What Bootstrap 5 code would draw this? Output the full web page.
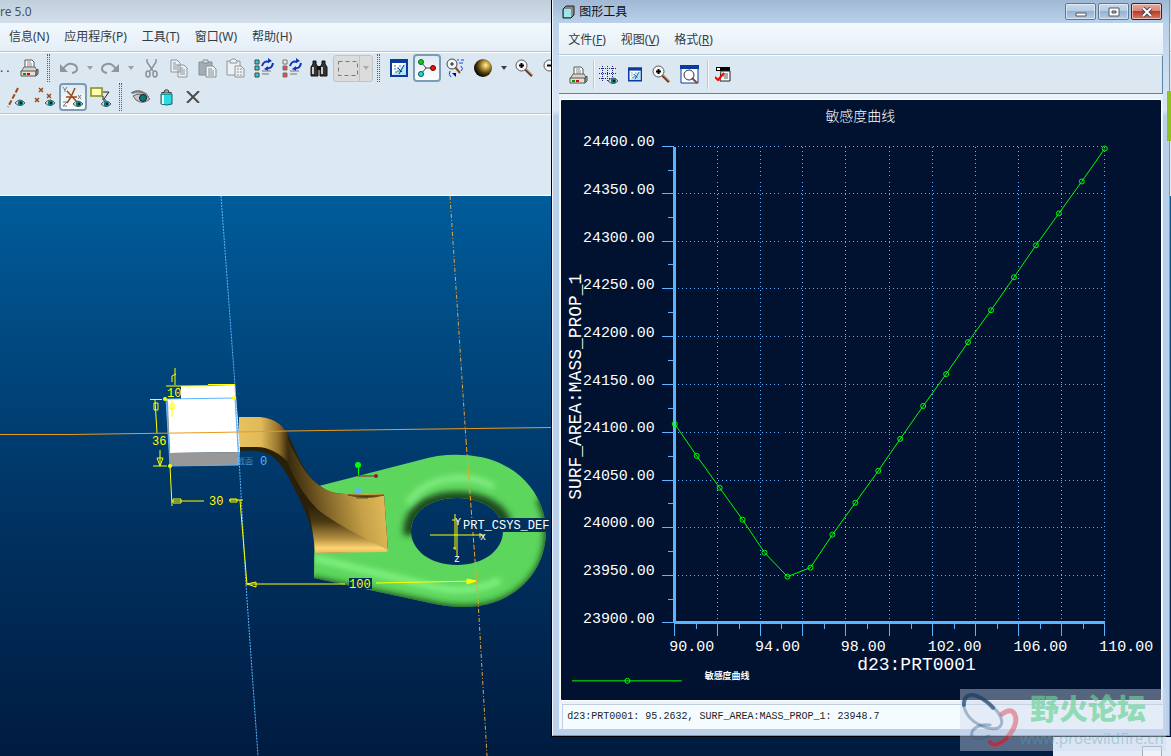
<!DOCTYPE html>
<html lang="zh-CN">
<head>
<meta charset="utf-8">
<meta name="viewport" content="width=device-width, initial-scale=1">
<title>Wildfire 5.0 - 图形工具</title>
<link href="https://cdn.jsdelivr.net/npm/bootstrap@5.3.0/dist/css/bootstrap.min.css" rel="stylesheet">
<script src="https://cdn.jsdelivr.net/npm/bootstrap@5.3.0/dist/js/bootstrap.bundle.min.js"></script>
<style>
  :root { --sky: #5ab4ff; --panel: #dbe8f2; --edge: #b2c8d6; }
  body { font: 12px/16px "Noto Sans", "Noto Sans CJK SC", sans-serif; color: #333b44; background: #001c42; }
  button, a { font-size: 12px; line-height: 16px; color: inherit; }
  .desk { min-height: 100vh; }
  .app-title { height: 23px; background: linear-gradient(#c1cfdc, #d2deeb); color: #48525e; }
  .app-menu { height: 28px; background: linear-gradient(#f1f8fd, #e5eef7); padding-left: 9px; gap: 15px; }
  .menu-item { border: 0; background: none; padding: 0; white-space: nowrap; }
  .tools { background: var(--panel); border-top: 1px solid var(--edge); border-bottom: 1px solid var(--edge); box-shadow: inset 0 1px #fff; padding: 2px 0 1px; height: 63px; gap: 1px; }
  .message { height: 82px; background: #dce9f3; border-top: 1px solid #fff; border-bottom: 1px solid #fff; }
  .tool { width: 28px; height: 28px; border: 0; background: none; padding: 0; display: flex; align-items: center; justify-content: center; flex: none; }
  .tool.narrow { width: 24px; }
  .tool.pressed { border: 2px solid #7a9db5; border-radius: 4px; background: linear-gradient(#dde9f2, #fff); }
  .drop { width: 13px; height: 28px; border: 0; background: none; padding: 0; flex: none; display: flex; align-items: center; justify-content: center; }
  .drop::after { content: ""; border: 3px solid transparent; border-top: 4px solid #9a9fa5; border-bottom: 0; }
  .drop.dark::after { border-top-color: #3a4048; }
  .grip { width: 3px; height: 28px; margin: 0 5px 0 4px; flex: none; border-left: 1px dotted #2b6a92; border-right: 1px dotted #2b6a92; }
  .picker { width: 40px; height: 27px; border: 1px solid #c2c2c2; border-radius: 3px; background: #dcdcdc; flex: none; }
  .picker .drop { border-left: 1px solid #c2c2c2; height: 25px; }
  .picker .drop::after { border-top-color: #a8b0a8; }
  .more-dots { width: 15px; flex: none; }
  .row-two { padding-left: 3px; }
  .viewport { background: linear-gradient(#005c9b, #00467c 30%, #003160 60%, #001b40); min-height: 560px; overflow: hidden; }
  .viewport svg { width: 551px; height: 560px; display: block; flex: none; }
  .cad { font-family: "Liberation Mono", "Noto Sans CJK SC", monospace; font-weight: 300; }

  .graph-win { position: absolute; left: 47%; right: 1px; top: 0; bottom: 19px; margin-left: 1px; border-left: 1px solid #000; border-bottom: 1px solid #000; }
  .frame { border-right: 1px solid #35b7d6; border-bottom: 1px solid #35b7d6; border-left: 1px solid #eef5fc; background: linear-gradient(#9fb8d3, #b9d0ea 22px, #dce8f5 110px, #b8d0ea 116px, #bcd0ea); padding: 0 6px 6px; }
  .win-title { height: 23px; color: #111; padding-left: 3px; }
  .cap-row { gap: 2px; padding-right: 1px; }
  .cap-btn { width: 31px; height: 17px; border: 1px solid #5f7894; border-radius: 2px; padding: 0; display: flex; align-items: center; justify-content: center; background: linear-gradient(#c8d9eb, #b5cbe2 50%, #97b3cf 50%, #b4cde6); box-shadow: inset 0 0 0 1px rgba(255,255,255,.5); }
  .cap-btn.shut { border-color: #5a1420; background: linear-gradient(#e5a79c, #d98475 50%, #b83c28 50%, #d87b64); }
  .win-menu { height: 32px; background: linear-gradient(#f3faff, #e6eef6); border-bottom: 1px solid var(--edge); padding: 2px 9px 0; gap: 15px; }
  .win-tools { height: 39px; background: var(--panel); border-top: 1px solid #fff; border-right: 1px solid #5887a5; border-bottom: 1px solid #5887a5; padding-left: 5px; }
  .rule { width: 1px; height: 28px; background: #b9c9d6; margin: 0 1px; flex: none; box-shadow: 1px 0 #f4f9fc; }
  .plot-box { background: #eaf2fa; padding: 5px 1px 3px; }
  .plot { background: #001230; border: 1px solid #fff; border-radius: 2px; overflow: hidden; }
  .plot svg { width: 100%; height: 100%; display: block; }
  .status { background: #f5fcff; border: 1px solid #c2cfdf; border-right: 0; border-bottom: 0; height: 25px; margin-left: 3px; padding-left: 4px; font: 10px/16px "Liberation Mono", monospace; color: #20262c; }
  .status-wrap { background: #f0f8fe; }
  .side-tab { position: absolute; right: 0; top: 91px; width: 4px; height: 50px; background: #90c31f; }
  .corner { position: absolute; right: 0; bottom: 0; width: 118px; height: 19px; background: #e3ecf6; padding: 9px 9px 0 0; }
  .corner i { width: 20px; height: 10px; border: 1px solid #9faab5; border-bottom: 0; background: #eef3f8; display: block; }
  .stamp { position: absolute; right: 5px; bottom: 5px; width: 206px; height: 62px; background: rgba(205,217,235,.42); }
  .stamp svg { width: 60px; height: 62px; flex: none; }
  .stamp-name { font: 900 29px/36px "Noto Sans CJK SC", sans-serif; color: rgba(105,210,150,.68); padding-left: 10px; }
  .stamp-url { font: 15px/26px "Noto Sans", sans-serif; color: rgba(90,165,185,.4); text-decoration: none; }
</style>
</head>
<body>
<svg width="0" height="0" class="position-absolute" aria-hidden="true">
  <defs>
    <g id="eye"><path d="M0 4Q5-2 10 4Q5 9 0 4Z" fill="#d8e4e4" stroke="#555" /><circle cx="5.500" cy="4" r="2.700" fill="#067a80"/><path d="M5 3h2v2H5z" fill="#022"/></g>
    <g id="printer"><path d="M5 8V1h7l2 2v5" fill="#fff" stroke="#555"/><path d="M7 3h4M7 5h5M7 7h5" stroke="#888"/><path d="M1 13l3-5h11l3 5z" fill="#d8d4c8" stroke="#666"/><path d="M1 12h15v5H1z" fill="#e4e0d4" stroke="#555"/><path d="M16 12l2-2v5l-2 2z" fill="#999" stroke="#555"/><path d="M3 14h3v2H3z" fill="#090"/><path d="M7 14h3v2H7z" fill="#d00"/></g>
    <g id="zoomin"><path d="M10 10l7 7" stroke="#6b3a20" stroke-width="2.500"/><path d="M11 10l6 6" stroke="#c98a60"/><circle cx="6.500" cy="6.500" r="5.500" fill="#f4f8fa" stroke="#555"/><path d="M4 6.500h5M6.500 4v5" stroke="#000" stroke-width="2"/></g>
    <g id="repaint"><path d="M1 1h16v16H1z" fill="#fff" stroke="#0b3ba0" stroke-width="2"/><path d="M0 0h18v4H0z" fill="#0b3ba0"/><path d="M2 16L16 4v12z" fill="#b8e3fb"/><path d="M4 7h2m1 2h2M4 10h2m1 2h3M9 7h2M5 13h2" stroke="#28a"/><path d="M9 15q2-3 5-9M12 13L8 9" stroke="#003c86"/></g>
    <g id="cycle" fill="none" stroke="#1035b5" stroke-width="2"><path d="M9 8Q11 2 16 4M20 5Q19 11 14 10"/><path d="M15 0v5l4-2zM15 8v5l-4-2z" fill="#1035b5" stroke="none"/></g>
    <radialGradient id="gold" cx=".65" cy=".35" r=".7"><stop stop-color="#fff3a8"/><stop offset=".25" stop-color="#cda94c"/><stop offset=".65" stop-color="#4c390c"/><stop offset="1"/></radialGradient>
  </defs>
</svg>

<main class="desk d-flex flex-column position-relative overflow-hidden">
  <header>
    <div class="app-title d-flex align-items-center">re 5.0</div>
    <nav class="app-menu d-flex align-items-center" aria-label="主菜单">
      <button class="menu-item">信息(N)</button><button class="menu-item">应用程序(P)</button><button class="menu-item">工具(T)</button><button class="menu-item">窗口(W)</button><button class="menu-item">帮助(H)</button>
    </nav>
    <div class="tools d-flex flex-column">
      <div class="d-flex align-items-center">
        <span class="more-dots">. .</span>
        <button class="tool" aria-label="打印"><svg width="19" height="18" fill="none"><use href="#printer"/></svg></button>
        <span class="grip"></span>
        <button class="tool" aria-label="撤消"><svg width="18" height="14" fill="none" stroke="#8f979e" stroke-width="2"><path d="M3 8Q7 2 12 3Q17 4 17 8Q17 11 12 12"/><path d="M0 3v8h8z" fill="#8f979e" stroke="none"/></svg></button><button class="drop" aria-label="撤消列表"></button>
        <button class="tool" aria-label="重做"><svg width="18" height="14" fill="none" stroke="#8f979e" stroke-width="2"><path d="M15 8Q11 2 6 3Q1 4 1 8Q1 11 6 12"/><path d="M18 3v8h-8z" fill="#8f979e" stroke="none"/></svg></button><button class="drop" aria-label="重做列表"></button>
        <button class="tool" aria-label="剪切"><svg width="13" height="19" fill="none" stroke="#899199" stroke-width="1.500"><path d="M2 0v3l6 9M11 0v3L5 12"/><ellipse cx="3" cy="15" rx="2" ry="3"/><ellipse cx="10" cy="15" rx="2" ry="3"/></svg></button>
        <button class="tool" aria-label="复制"><svg width="18" height="19" fill="#edf2f5" stroke="#8b949b"><path d="M1 1h6l3 3v9H1zM8 6h6l3 3v9H8z"/><path d="M3 4h3M3 6h5M3 8h4M3 10h4M10 9h3M10 11h5M10 13h5M10 15h5"/></svg></button>
        <button class="tool" aria-label="粘贴"><svg width="19" height="19" fill="#a5adb3" stroke="#858e95"><path d="M1 3h13v13H1z"/><path d="M5 1h5v3H5z" fill="#ddd"/><path d="M8 7h7l3 3v8H8z" fill="#eef3f5"/><path d="M10 10h4M10 12h6M10 14h6M10 16h6"/></svg></button>
        <button class="tool" aria-label="选择性粘贴"><svg width="19" height="20" fill="#edf1f3" stroke="#8c949a"><path d="M1 3h13v14H1z"/><path d="M4 3l2-2h3l2 2v2H4z"/><path d="M9 8h6l3 3v8H9z"/><path d="M11 11h2M11 14h2M11 17h2M14 11h2M14 14h2M14 17h2"/></svg></button>
        <button class="tool" aria-label="再生"><svg width="21" height="20"><g fill="#36c9c9" stroke="#444"><path d="M2 2h4v4H2zM2 8h4v4H2zM2 15h4v4H2z"/></g><use href="#cycle"/><path d="M9 13h9M9 16h7" stroke="#777"/></svg></button>
        <button class="tool" aria-label="再生管理器"><svg width="21" height="20"><g fill="#e44" stroke="#777"><path d="M2 2h4v4H2z" fill="#eee"/><path d="M2 8h4v4H2zM2 15h4v4H2z"/></g><use href="#cycle"/><path d="M9 13h9M9 16h7" stroke="#777"/></svg></button>
        <button class="tool" aria-label="查找"><svg width="18" height="17"><path d="M3 1h3v3l2 3v9H1V7l2-3zM12 1h3v3l2 3v9h-7V7l2-3z" fill="#333" stroke="#111"/><path d="M7 6h4v4H7z" fill="#111"/><path d="M3 7v7M12 7v7" stroke="#ccc" stroke-width="2"/></svg></button>
        <span class="picker d-flex align-items-center justify-content-between"><svg class="ms-1" width="20" height="15" fill="none" stroke="#777"><path d="M.5.5h19v14H.5z" stroke-dasharray="4 3"/></svg><button class="drop" aria-label="选择方式"></button></span>
        <span class="grip"></span>
        <button class="tool" aria-label="重画"><svg width="18" height="18" fill="none"><use href="#repaint"/></svg></button>
        <button class="tool pressed" aria-label="旋转中心"><svg width="18" height="18"><path d="M3 3l5 6h8M8 9l-5 6" stroke="#444" fill="none"/><circle cx="3" cy="3" r="2.500" fill="#1c1" stroke="#063"/><circle cx="3" cy="15" r="2.500" fill="#2dd" stroke="#055"/><circle cx="15" cy="9" r="2.500" fill="#e11" stroke="#600"/></svg></button>
        <button class="tool" aria-label="定向模式"><svg width="18" height="20" fill="none"><path d="M9 9l5 6" stroke="#8a4b25" stroke-width="2"/><circle cx="6" cy="6" r="5" fill="#f2f7fa" stroke="#444"/><path d="M4 6h4M6 4v4" stroke="#222"/><path d="M11 2h2m2 0h3M13 5h4M15 8q3 3 0 5M4 13q-2 4 1 6" stroke="#14c"/><path d="M6 15h4v4z" fill="#009"/></svg></button>
        <button class="tool" aria-label="外观库"><svg width="18" height="18"><circle cx="9" cy="9" r="9" fill="url(#gold)"/></svg></button><button class="drop dark" aria-label="外观列表"></button>
        <button class="tool" aria-label="放大"><svg width="19" height="19" fill="none"><use href="#zoomin"/></svg></button>
        <button class="tool" aria-label="缩小"><svg width="19" height="19" fill="none"><path d="M10 10l7 7" stroke="#6b3a20" stroke-width="2.500"/><circle cx="6.500" cy="6.500" r="5.500" fill="#f4f8fa" stroke="#555"/><path d="M4 6.500h5" stroke="#000" stroke-width="2"/></svg></button>
      </div>
      <div class="row-two d-flex align-items-center">
        <button class="tool" aria-label="基准轴"><svg width="20" height="21" fill="none"><path d="M11 1L1 20" stroke="#9a4a18" stroke-width="2" stroke-dasharray="5 2"/><use href="#eye" x="8" y="12"/></svg></button>
        <button class="tool" aria-label="基准点"><svg width="22" height="21" fill="none"><path d="M5 1l4 4m0-4L5 5M1 11l4 4m0-4l-4 4M13 7l4 4m0-4l-4 4" stroke="#9a4a18" stroke-width="1.500"/><use href="#eye" x="11" y="12"/></svg></button>
        <button class="tool pressed" aria-label="坐标系"><svg width="22" height="22" fill="none"><path d="M1 1l2 3 2-3M3 4v2M1 16h4l-4 4h4M16 9l3 4m0-4l-3 4" stroke="#777"/><path d="M13 2L9 11H4M9 11h6M5 5l10 11M9 11l-4 6" stroke="#9a4a18" stroke-width="1.500"/><use href="#eye" x="11" y="14"/></svg></button>
        <button class="tool" aria-label="注释"><svg width="22" height="22" fill="none"><path d="M1 2h11v8H1z" fill="#ffffb0" stroke="#8a8a10" stroke-width="1.500"/><path d="M13 6h6l-5 7m-1-3v4h3" stroke="#222"/><use href="#eye" x="11" y="14"/></svg></button>
        <span class="grip"></span>
        <button class="tool" aria-label="显示"><svg width="20" height="16" fill="none"><path d="M0 4Q9-2 18 8M2 7Q10 2 19 10Q12 16 5 11z" fill="#c9c9c5" stroke="#666"/><path d="M1 4Q9 0 16 6" stroke="#777" stroke-width="2"/><circle cx="12" cy="9" r="3.500" fill="#067a80" stroke="#222"/></svg></button>
        <button class="tool narrow" aria-label="删除"><svg width="14" height="17"><path d="M1 5h11v10q-5 2-11 0z" fill="#2bd9e0" stroke="#166"/><path d="M3 6v9" stroke="#dff" stroke-width="2"/><path d="M1 4q5-2 11 0M4 3q0-3 4-2l1 2" stroke="#333" fill="none"/></svg></button>
        <button class="tool" aria-label="关闭"><svg width="14" height="12"><path d="M1 0l12 12M13 0L1 12" stroke="#4a4a4a" stroke-width="2"/></svg></button>
      </div>
    </div>
    <div class="message"></div>
  </header>

  <section class="viewport flex-grow-1 d-flex" aria-label="模型">
    <svg class="cad" viewBox="0 196 551 560" fill="none">
      <defs>
        <linearGradient id="arm" gradientUnits="userSpaceOnUse" x1="238" x2="289" y1="0" y2="0"><stop stop-color="#e9c35f"/><stop offset=".45" stop-color="#e0b958"/><stop offset=".8" stop-color="#93712d"/><stop offset="1" stop-color="#33270b"/></linearGradient>
        <linearGradient id="bend" gradientUnits="userSpaceOnUse" x1="288" x2="386" y1="470" y2="452"><stop stop-color="#33270b"/><stop offset=".3" stop-color="#7d6126"/><stop offset=".65" stop-color="#c6a047"/><stop offset="1" stop-color="#e9c35f"/></linearGradient>
        <linearGradient id="foot" gradientUnits="userSpaceOnUse" x1="0" x2="0" y1="505" y2="553"><stop stop-color="#2a1f08"/><stop offset=".35" stop-color="#4b3912"/><stop offset=".7" stop-color="#b58f41"/><stop offset=".9" stop-color="#ffd573"/><stop offset="1" stop-color="#e6b95a"/></linearGradient>
        <path id="lug" fill-rule="evenodd" d="M315 487L420 460Q440 454 462 455C515 456 546 494 546 532C545 575 512 607 463 607Q448 607 430 603L314 578ZM457 498C430 498 411 512 411 531S430 565 457 565S503 550 503 531S484 498 457 498Z"/>
        <clipPath id="lugclip"><use href="#lug" clip-rule="evenodd"/></clipPath>
        <filter id="soft" x="-20%" y="-20%" width="140%" height="140%"><feGaussianBlur stdDeviation="3"/></filter>
      </defs>
      <use href="#lug" fill="#5dd65d"/>
      <g clip-path="url(#lugclip)">
        <g filter="url(#soft)">
          <path d="M310 586L430 611Q448 615 463 615C517 615 554 580 554 532Q554 514 545 496" stroke="#1f521f" stroke-width="20"/>
          <path d="M314 558L430 586Q470 596 500 580" stroke="#8dfa8d" stroke-width="5"/>
          <path d="M411 535C409 512 430 499 457 499S502 512 504 524" stroke="#1b4a1b" stroke-width="15"/>
          <path d="M408 503Q425 479 458 478Q480 478 494 487" stroke="#98fa98" stroke-width="4"/>
        </g>
      </g>
      <path d="M239 417H260C275 418 283 426 288 434C299 458 304 474 320 486Q330 494 345 494H384L388 551L315 553C314 530 307 515 300 500C288 475 280 460 270 455Q259 449 240 451Z" fill="#2a1f08"/>
      <path d="M239 417H260C275 418 283 426 288 434L290 464Q273 446 255 447H239Z" fill="url(#arm)"/>
      <path d="M288 440C299 462 306 476 320 486Q332 494 345 494H384L388 551Q340 528 318 510Q300 492 288 464Z" fill="url(#bend)"/>
      <path d="M305 498Q320 517 388 550L387 552L315 553Q313 525 305 498Z" fill="url(#foot)"/>
      <path d="M348 495q18 5 36 0q-18 1-36 0M356 498h12" fill="#4b3912" stroke="#6b5118"/>
      <path d="M181 386L235 385L238 420L240 452L170 453L167 399H181Z" fill="#fff"/>
      <path d="M170 453L240 452L239 465L170 466L166 400L168 401Z" fill="#989898"/>
      <path d="M166 399L235 398L239 465L170 466Z" stroke="#5ab4ff"/>
      <path d="M221 196L235 385M246 585L258 756" stroke="#5ab4ff" stroke-dasharray="2 1"/>
      <path d="M235 385L246 585" stroke="#5ab4ff" stroke-dasharray="2 1"/>
      <path d="M450 196L466 440M478 600L487 756" stroke="#e8a53c" stroke-dasharray="4 2 1 2"/>
      <path d="M466 440L478 600" stroke="#ff9f18" stroke-dasharray="5 2"/>
      <path d="M0 434.500H70L214 432.500L288 431L360 430L551 427.500" stroke="#e99a20"/>
      <g stroke="#ff0">
        <path d="M166 386h42M208 384.500h27M175 368v17M172 382v-6l4-2M150 399.500h12M155 400l2 33M154 410v-7h4v7zM153 466h14M160 450v16M157 458h6l-3 8zM170 466L172 506M172 501h32M173 499h8v4h-8zM229 500h14M230 499h7v3h-7zM240 500L247 585" />
        <path d="M172 400v17M170 405v4h4v-6z"/>
        <path d="M247 584h98M376 583L476 581M247 584l9-2v5z"/>
        <path d="M467 579l9 2-9 3z" fill="#ff0"/>
        <path d="M455 514v36M457 520v37M430 535h54M455 520h-3M453 548h3M480 533v5"/>
      </g>
      <g fill="#ff0"><circle cx="165" cy="399" r="2"/><circle cx="170" cy="466" r="2"/><circle cx="234" cy="398" r="2"/></g>
      <path d="M358.500 466v10" stroke="#0f0"/><path d="M358 476h18" stroke="#a01038"/><path d="M357.500 477v14" stroke="#5ab4ff"/>
      <circle cx="358" cy="465" r="3" fill="#0f0"/><circle cx="376" cy="476" r="2" fill="#a01038"/><circle cx="358" cy="491" r="3" fill="#5ab4ff"/>
      <path d="M349 578h23v11h-23zM462 518h88v14h-88z" fill="#00305c"/>
      <g fill="#ff0" font-size="12"><text x="167" y="397">10</text><text x="152" y="445">36</text><text x="209" y="505">30</text><text x="349" y="588">100</text></g>
      <g fill="#fff" font-size="12"><text x="463" y="529">PRT_CSYS_DEF</text><text x="455" y="525" font-size="10">Y</text><text x="480" y="540" font-size="10">x</text><text x="454" y="562" font-size="10">z</text></g>
      <g fill="#5ab4ff"><text x="237" y="464" font-size="8">截面</text><text x="260" y="465" font-size="12">0</text></g>
    </svg>
  </section>

  <section class="graph-win d-flex" aria-label="图形工具">
    <div class="frame d-flex flex-column flex-grow-1">
      <div class="win-title d-flex align-items-center">
        <svg width="13" height="14"><path d="M1 4l3-3h8v9l-3 3H1z" fill="#888" stroke="#222"/><path d="M2 4h7v8H2z" fill="#9ce8e8"/></svg>
        <span class="ms-1 flex-grow-1">图形工具</span>
        <span class="cap-row d-flex">
          <button class="cap-btn" aria-label="最小化"><svg width="12" height="10"><path d="M1 6h10v3H1z" fill="#fff" stroke="#556"/></svg></button>
          <button class="cap-btn" aria-label="最大化"><svg width="12" height="10"><path d="M1 1h10v8H1z" fill="#fff" stroke="#556"/><path d="M4 4h4v2H4z" fill="#9ab" stroke="#556"/></svg></button>
          <button class="cap-btn shut" aria-label="关闭"><svg width="12" height="10"><path d="M2 1l8 8M10 1L2 9" stroke="#445" stroke-width="4"/><path d="M2 1l8 8M10 1L2 9" stroke="#fff" stroke-width="2"/></svg></button>
        </span>
      </div>
      <nav class="win-menu d-flex align-items-center" aria-label="图形菜单">
        <button class="menu-item">文件(<u>F</u>)</button><button class="menu-item">视图(<u>V</u>)</button><button class="menu-item">格式(<u>R</u>)</button>
      </nav>
      <div class="win-tools d-flex align-items-center">
        <button class="tool" aria-label="打印"><svg width="19" height="18" fill="none"><use href="#printer"/></svg></button>
        <span class="rule"></span>
        <button class="tool" aria-label="栅格"><svg width="20" height="20" fill="none"><path d="M3.500 1v16M8.500 1v16M13.500 1v16M0 3.500h18M0 8.500h18M0 13.500h18" stroke="#23238a" stroke-dasharray="1 1"/><use href="#eye" x="9" y="12"/></svg></button>
        <button class="tool narrow" aria-label="重画"><svg width="14" height="15" viewBox="0 0 18 18" fill="none"><use href="#repaint"/></svg></button>
        <button class="tool" aria-label="放大"><svg width="18" height="19" fill="none"><use href="#zoomin"/></svg></button>
        <button class="tool" aria-label="重新调整"><svg width="19" height="19" fill="none"><path d="M1 1h17v17H1z" fill="#fff" stroke="#0b3ba0"/><path d="M0 0h19v4H0z" fill="#0b3ba0"/><path d="M12 13l5 5" stroke="#8a4b25" stroke-width="2"/><circle cx="9" cy="10" r="5" stroke="#333"/></svg></button>
        <span class="rule ms-1"></span>
        <button class="tool" aria-label="格式"><svg width="16" height="15" fill="none"><path d="M1 0h14v4H1z" fill="#000"/><path d="M2 1h3v2H2z" fill="#fff"/><path d="M6 4h9v10H5z" fill="#fff" stroke="#222"/><path d="M9 7h4M8 9h5M9 11h4" stroke="#555"/><path d="M0 10l3 3 6-7" stroke="#f00" stroke-width="2"/></svg></button>
      </div>
      <div class="plot-box flex-grow-1 d-flex">
        <div class="plot flex-grow-1">
          <svg class="cad" viewBox="561 100 601 600" fill="none" role="img" aria-label="敏感度曲线">
            <g id="grid" stroke="#5ab4ff" stroke-dasharray="1 3" shape-rendering="crispEdges"></g>
            <g id="ticks" stroke="#5ab4ff" shape-rendering="crispEdges"></g>
            <path d="M674.500 146V624M674 623.500H1106" stroke="#5ab4ff" stroke-width="3" shape-rendering="crispEdges"/>
            <g id="labels" fill="#fff" font-size="15"></g>
            <text x="826" y="120" font-size="14" fill="#fff">敏感度曲线</text>
            <text x="858" y="671" font-size="18" fill="#fff">d23:PRT0001</text>
            <text transform="translate(581 500) rotate(-90)" font-size="18" fill="#fff">SURF_AREA:MASS_PROP_1</text>
            <g id="curve" stroke="#0f0"></g>
            <path d="M572 681.500h110" stroke="#0f0"/><circle cx="627.500" cy="681.500" r="2.500" stroke="#0f0"/>
            <text x="705" y="680" font-size="9" font-weight="700" fill="#fff">敏感度曲线</text>
          </svg>
        </div>
      </div>
      <div class="status-wrap"><div class="status d-flex align-items-center">d23:PRT0001: 95.2632, SURF_AREA:MASS_PROP_1: 23948.7</div></div>
    </div>
  </section>

  <div class="side-tab"></div>
  <div class="corner d-flex justify-content-end"><i></i></div>
  <div class="stamp d-flex">
    <svg viewBox="0 0 60 62" fill="none" stroke-linecap="round">
      <path d="M7 25C-2 9 8 3 17 7C34 14 49 33 38 39C30 42 13 35 7 25" stroke="#254f76" stroke-opacity=".35" stroke-width="3"/>
      <path d="M4 16Q4 3 17 7Q26 11 33 19" stroke="#123a60" stroke-opacity=".6" stroke-width="4"/>
      <path d="M30 36C16 34 8 44 13 48Q18 52 29 47" stroke="#31608b" stroke-opacity=".4" stroke-width="3"/>
      <path d="M42 25Q50 19 54 24Q60 34 47 49Q35 60 31 54" stroke="#e04a55" stroke-opacity=".5" stroke-width="5"/>
      <path d="M47 49Q35 60 30 53" stroke="#a5213a" stroke-opacity=".6" stroke-width="4"/>
    </svg>
    <div class="d-flex flex-column text-nowrap"><span class="stamp-name">野火论坛</span><a class="stamp-url" href="#">www.proewildfire.cn</a></div>
  </div>
</main>

<script>
  const NS = 'http://www.w3.org/2000/svg';
  const add = (parent, tag, attrs, text) => {
    const el = document.createElementNS(NS, tag);
    for (const k in attrs) el.setAttribute(k, attrs[k]);
    if (text) el.textContent = text;
    document.getElementById(parent).append(el);
  };
  const px = v => 674.5 + (v - 90) * 21.55;
  const py = v => 145.5 + (24400 - v) * 0.956;

  for (let v = 23900; v <= 24400; v += 50) {
    const y = Math.floor(py(v)) + 0.5;
    if (v > 23900) add('grid', 'path', { d: `M678 ${y}H1106` });
    add('ticks', 'path', { d: `M662 ${y}H674` + (v < 24400 ? `M668 ${y - 24}H674` : '') });
    add('labels', 'text', { x: 583, y: y }, v.toFixed(2));
  }
  for (let v = 90; v <= 110; v += 2) {
    const x = Math.floor(px(v)) + 0.5;
    if (v > 90) add('grid', 'path', { d: `M${x} 146V622` });
    add('ticks', 'path', { d: `M${x} 624V637` + (v < 110 ? `M${x + 22} 624V630` : '') });
    if (v % 4 === 2) add('labels', 'text', { x: x - 5, y: 652 }, v.toFixed(2));
  }
  const area = [24109, 24075, 24042, 24008, 23974, 23948.7, 23958, 23993, 24026, 24060, 24093, 24127, 24161, 24194, 24228, 24262, 24296, 24329, 24363, 24397];
  const pts = area.map((a, i) => [Math.round(px(90 + i * 20 / 19)), Math.round(py(a))]);
  add('curve', 'polyline', { points: pts.join(' ') });
  pts.forEach(([cx, cy]) => add('curve', 'circle', { cx, cy, r: 2.5 }));
</script>
</body>
</html>
